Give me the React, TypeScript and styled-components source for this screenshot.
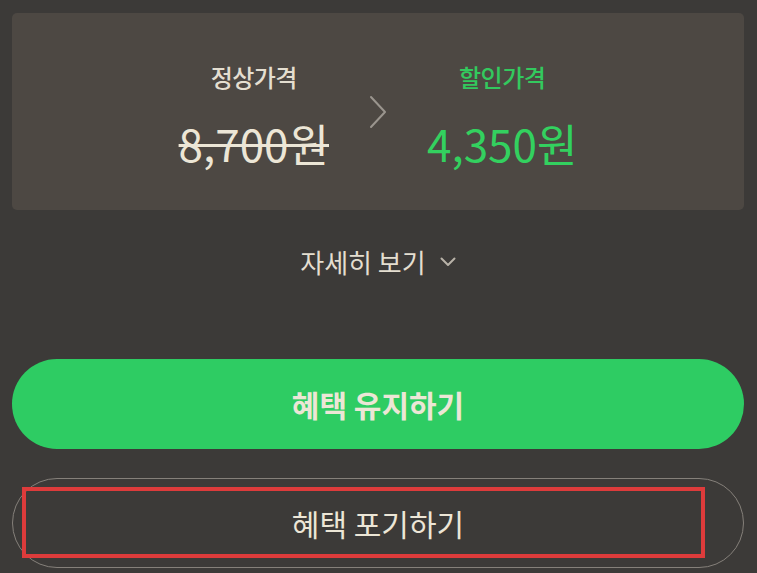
import React from "react";
import styled, { createGlobalStyle } from "styled-components";

const Global = createGlobalStyle`
  html, body {
    margin: 0;
    padding: 0;
    background: #3c3a38;
  }
  body {
    font-family: "Noto Sans CJK KR", "Noto Sans", sans-serif;
    color: #ece6d6;
  }
`;

const Page = styled.div`
  width: 757px;
  height: 573px;
  box-sizing: border-box;
  padding: 13px 13px 0 12px;
  display: flex;
  flex-direction: column;
  overflow: hidden;
`;

const Card = styled.div`
  height: 197px;
  box-sizing: border-box;
  padding-top: 6px;
  background: #4d4843;
  border-radius: 5px;
  display: flex;
  align-items: center;
  justify-content: center;
  gap: 40px;
`;

const PriceCol = styled.div`
  display: flex;
  flex-direction: column;
  align-items: center;
  gap: 28px;
`;

const Label = styled.div<{ $accent?: boolean }>`
  font-size: 24px;
  line-height: 28px;
  font-weight: 500;
  letter-spacing: -0.5px;
  color: ${(p) => (p.$accent ? "#33c95e" : "#e4ded0")};
`;

const Price = styled.div<{ $accent?: boolean; $strike?: boolean }>`
  font-size: 44px;
  line-height: 48px;
  font-weight: 400;
  color: ${(p) => (p.$accent ? "#33d15f" : "#ece6d6")};
  text-decoration: ${(p) => (p.$strike ? "line-through" : "none")};
  text-decoration-thickness: 3px;
`;

const Arrow = styled.svg`
  width: 18px;
  height: 34px;
  margin-top: -6px;
`;

const Details = styled.button`
  align-self: center;
  margin-top: 36px;
  background: none;
  border: none;
  padding: 0;
  display: flex;
  align-items: center;
  gap: 14px;
  font-family: inherit;
  font-size: 26px;
  line-height: 32px;
  color: #e4ded0;
`;

const Buttons = styled.div`
  margin-top: 81px;
  display: flex;
  flex-direction: column;
  gap: 29px;
`;

const PillButton = styled.button<{ $primary?: boolean }>`
  position: relative;
  height: 90px;
  width: 100%;
  border-radius: 45px;
  font-family: inherit;
  font-size: 30px;
  font-weight: ${(p) => (p.$primary ? 700 : 400)};
  color: #ece6d6;
  background: ${(p) => (p.$primary ? "#2ecc63" : "transparent")};
  border: ${(p) => (p.$primary ? "none" : "1.5px solid #85807a")};
  box-sizing: border-box;
  padding: 0;
  display: flex;
  align-items: center;
  justify-content: center;
`;

const Highlight = styled.div`
  position: absolute;
  left: 9px;
  top: 8px;
  width: 683px;
  height: 71px;
  box-sizing: border-box;
  border: 4px solid #dd3b3b;
  pointer-events: none;
`;

export default function App() {
  return (
    <>
      <Global />
      <Page>
        <Card>
          <PriceCol>
            <Label>정상가격</Label>
            <Price $strike>8,700원</Price>
          </PriceCol>
          <Arrow viewBox="0 0 18 34" fill="none">
            <path d="M2 2 L16 17 L2 32" stroke="#9a958e" strokeWidth="2" strokeLinecap="round" strokeLinejoin="round" />
          </Arrow>
          <PriceCol>
            <Label $accent>할인가격</Label>
            <Price $accent>4,350원</Price>
          </PriceCol>
        </Card>
        <Details>
          자세히 보기
          <svg width="16" height="10" viewBox="0 0 16 10" fill="none">
            <path d="M1.5 1.5 L8 8 L14.5 1.5" stroke="#b8b2a8" strokeWidth="2" strokeLinecap="round" strokeLinejoin="round" />
          </svg>
        </Details>
        <Buttons>
          <PillButton $primary>혜택 유지하기</PillButton>
          <PillButton>
            혜택 포기하기
            <Highlight />
          </PillButton>
        </Buttons>
      </Page>
    </>
  );
}
